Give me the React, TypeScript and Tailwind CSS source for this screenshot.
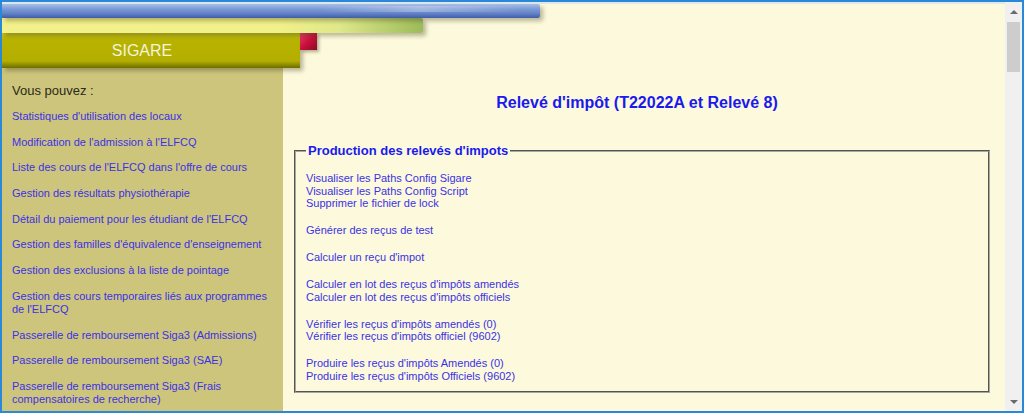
import React from "react";

const sideLinks = [
  "Statistiques d'utilisation des locaux",
  "Modification de l'admission à l'ELFCQ",
  "Liste des cours de l'ELFCQ dans l'offre de cours",
  "Gestion des résultats physiothérapie",
  "Détail du paiement pour les étudiant de l'ELFCQ",
  "Gestion des familles d'équivalence d'enseignement",
  "Gestion des exclusions à la liste de pointage",
  "Gestion des cours temporaires liés aux programmes de l'ELFCQ",
  "Passerelle de remboursement Siga3 (Admissions)",
  "Passerelle de remboursement Siga3 (SAE)",
  "Passerelle de remboursement Siga3 (Frais compensatoires de recherche)",
];

const groups: string[][] = [
  [
    "Visualiser les Paths Config Sigare",
    "Visualiser les Paths Config Script",
    "Supprimer le fichier de lock",
  ],
  ["Générer des reçus de test"],
  ["Calculer un reçu d'impot"],
  [
    "Calculer en lot des reçus d'impôts amendés",
    "Calculer en lot des reçus d'impôts officiels",
  ],
  [
    "Vérifier les reçus d'impôts amendés (0)",
    "Vérifier les reçus d'impôts officiel (9602)",
  ],
  [
    "Produire les reçus d'impôts Amendés (0)",
    "Produire les reçus d'impôts Officiels (9602)",
  ],
];

export default function App() {
  return (
    <div className="w-[1024px] h-[413px] border-2 border-[#2a88d8] flex bg-[#fcf9dc] overflow-hidden font-['Liberation_Sans',Arial,sans-serif]">
      <div className="flex-1 min-w-0 flex flex-col">
        {/* Header banner */}
        <div className="h-[66px] flex flex-col">
          <div className="h-[2px] bg-[#dfe7ef]" />
          <div className="h-[14px] flex">
            <div className="w-[538px] h-full rounded-r-[2px] bg-[linear-gradient(180deg,#a9c0e6_0%,#7c9ad6_35%,#6685c9_65%,#3f5da8_100%)] shadow-[3px_3px_4px_rgba(60,60,20,0.35)] relative z-30">
              <div className="absolute right-[20px] top-[2px] w-[200px] h-[6px] bg-[linear-gradient(90deg,rgba(255,255,255,0),rgba(255,255,255,0.3),rgba(255,255,255,0))]" />
            </div>
          </div>
          <div className="h-[15px] flex">
            <div className="w-[421px] h-full rounded-r-[2px] bg-[linear-gradient(90deg,#f3f18c_0%,#f2f08a_65%,#dfe88a_80%,#9cbb5a_100%)] shadow-[3px_3px_4px_rgba(60,60,20,0.35)] relative z-20" />
          </div>
          <div className="h-[35px] flex items-start">
            <div className="w-[298px] h-full flex items-center justify-center bg-[linear-gradient(180deg,#c4bf1c_0%,#b8b300_20%,#b4af00_80%,#6d6d00_100%)] shadow-[3px_3px_4px_rgba(60,60,20,0.35)] relative z-10">
              <span className="text-[16px] leading-[18px] text-[#f4f3dc] pr-[18px]">SIGARE</span>
            </div>
            <div className="w-[17px] h-[17px] bg-[linear-gradient(135deg,#e8406a_0%,#c8103c_50%,#8a0a28_100%)] shadow-[2px_2px_3px_rgba(60,60,20,0.4)] relative z-10" />
          </div>
        </div>

        {/* Body */}
        <div className="flex-1 flex min-h-0">
          <div className="w-[281px] shrink-0 bg-[#cec57c] pl-[10px] pr-[6px] pt-[15px]">
            <div className="text-[13px] leading-[15px] text-[#2a2a1a]">Vous pouvez :</div>
            <div className="mt-[12px] flex flex-col gap-[12.7px]">
              {sideLinks.map((t) => (
                <a key={t} href="#" className="block text-[11px] leading-[13px] text-[#3a32e6]">
                  {t}
                </a>
              ))}
            </div>
          </div>

          <div className="flex-1 min-w-0 flex flex-col">
            <div className="pt-[26px] pr-[14px] text-center text-[16px] leading-[18px] font-bold text-[#1a1aef]">
              Relevé d'impôt (T22022A et Relevé 8)
            </div>
            <fieldset className="mt-[31px] ml-[11px] mr-[15px] border-2 [border-style:groove] border-[#a8a8a0] pl-[10px] pr-[10px] pb-[8px]">
              <legend className="px-[2px] text-[13px] leading-[15px] font-bold text-[#1a1aef]">
                Production des relevés d'impots
              </legend>
              <div className="pt-[14px] flex flex-col gap-[14.3px]">
                {groups.map((g, i) => (
                  <div key={i} className="flex flex-col">
                    {g.map((t) => (
                      <a key={t} href="#" className="block text-[11px] leading-[12.65px] text-[#3a32e6]">
                        {t}
                      </a>
                    ))}
                  </div>
                ))}
              </div>
            </fieldset>
          </div>
        </div>
      </div>

      {/* Scrollbar */}
      <div className="w-[17px] shrink-0 bg-[#f0f0f0] flex flex-col items-center">
        <div className="h-[20px] flex items-center justify-center">
          <div className="w-0 h-0 border-l-[4px] border-r-[4px] border-b-[4px] border-l-transparent border-r-transparent border-b-[#6a6a6a]" />
        </div>
        <div className="w-[13px] h-[50px] bg-[#cdcdcd]" />
        <div className="flex-1" />
        <div className="h-[18px] flex items-center justify-center">
          <div className="w-0 h-0 border-l-[4px] border-r-[4px] border-t-[4px] border-l-transparent border-r-transparent border-t-[#6a6a6a]" />
        </div>
      </div>
    </div>
  );
}
